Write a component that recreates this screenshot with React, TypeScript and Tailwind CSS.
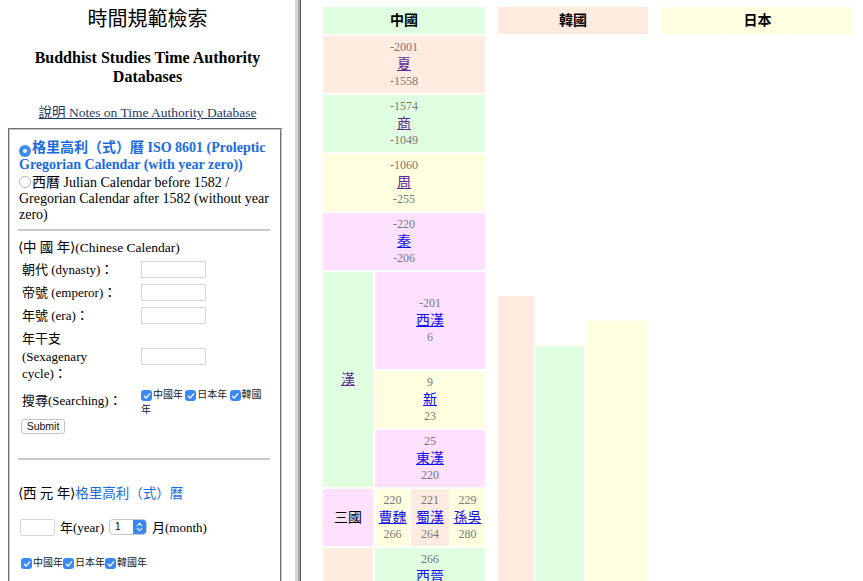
import React from 'react'

type EraProps = {
  from: string
  name: string
  to: string
  bg: string
  visited?: boolean
  className?: string
}

function Era({ from, name, to, bg, visited, className }: EraProps) {
  return (
    <div className={`${bg} flex flex-col items-center justify-center text-center leading-[17px] ${className ?? ''}`}>
      <span className="text-[12px] text-[#787878]">{from}</span>
      <a href="#" className={`text-[14px] underline ${visited ? 'text-[#5b2a94]' : 'text-[#1010ee]'}`}>
        {name}
      </a>
      <span className="text-[12px] text-[#787878]">{to}</span>
    </div>
  )
}

function Radio({ checked }: { checked?: boolean }) {
  if (checked) {
    return (
      <span className="inline-flex w-[12px] h-[12px] rounded-full bg-[#3d8bf6] items-center justify-center align-[-1px] mr-[1px]">
        <span className="w-[4px] h-[4px] rounded-full bg-white" />
      </span>
    )
  }
  return <span className="inline-block w-[12px] h-[12px] rounded-full border border-[#b9b9b9] bg-white align-[-1px] mr-[1px]" />
}

function Check() {
  return (
    <span className="inline-flex w-[11px] h-[11px] rounded-[3px] bg-[#3a88f6] items-center justify-center align-[-2px] mr-[1px]">
      <svg width="8" height="8" viewBox="0 0 8 8" fill="none">
        <path d="M1.3 4.2 3.1 6 6.7 1.8" stroke="white" strokeWidth="1.3" strokeLinecap="round" strokeLinejoin="round" />
      </svg>
    </span>
  )
}

function TextBox({ className }: { className?: string }) {
  return <span className={`block h-[17px] border border-[#d6d6d6] bg-white ${className ?? ''}`} />
}

function LeftPane() {
  return (
    <div className="w-[295px] h-[581px] overflow-hidden shrink-0 text-[13px] text-black">
      <h1 className="pt-[7px] text-center text-[20px] leading-[24px]">時間規範檢索</h1>
      <h3 className="mt-[17px] text-center font-bold text-[16px] leading-[19px]">
        Buddhist Studies Time Authority
        <br />
        Databases
      </h3>
      <p className="mt-[19px] text-center leading-[16px] text-[13.5px]">
        <a href="#" className="underline text-[#1f3a68]">說明 Notes on Time Authority Database</a>
      </p>

      <div className="mt-[7px] ml-[8px] w-[274px] h-[460px] border-2 [border-style:groove] border-[#c4c4c4] pl-[8px] pr-[10px] pt-[10px]">
        <div className="leading-[16px] pl-[1px] text-[14px]">
          <div className="font-bold text-[#1a6be0]">
            <Radio checked />格里高利（式）曆 ISO 8601 (Proleptic Gregorian Calendar (with year zero))
          </div>
          <div className="mt-[2px]">
            <Radio />西曆 Julian Calendar before 1582 / Gregorian Calendar after 1582 (without year zero)
          </div>
        </div>

        <div className="mt-[6px] h-[2px] bg-[#c9c9c9]" />

        <div className="mt-[9px] leading-[16px] text-[13.5px]">⟨中 國 年⟩(Chinese Calendar)</div>

        <div className="pl-[4px]">
          <div className="mt-[5px] flex items-center">
            <span className="w-[119px] leading-[17px] whitespace-nowrap">朝代 (dynasty)：</span>
            <TextBox className="w-[65px]" />
          </div>
          <div className="mt-[6px] flex items-center">
            <span className="w-[119px] leading-[17px] whitespace-nowrap">帝號 (emperor)：</span>
            <TextBox className="w-[65px]" />
          </div>
          <div className="mt-[6px] flex items-center">
            <span className="w-[119px] leading-[17px] whitespace-nowrap">年號 (era)：</span>
            <TextBox className="w-[65px]" />
          </div>
          <div className="mt-[6px] flex items-center">
            <span className="w-[119px] leading-[17.5px]">
              年干支
              <br />
              (Sexagenary
              <br />
              cycle)：
            </span>
            <TextBox className="w-[65px]" />
          </div>
          <div className="mt-[3px] flex items-center">
            <span className="w-[119px] leading-[17px] whitespace-nowrap">搜尋(Searching)：</span>
            <span className="text-[10px] leading-[15px] text-[#222] font-['Noto_Sans_CJK_TC',sans-serif]">
              <Check />中國年 <Check />日本年 <Check />韓國
              <br />年
            </span>
          </div>
        </div>

        <button className="mt-[2px] ml-[3px] h-[15px] w-[44px] rounded-[3px] border border-[#c3c3c3] bg-white text-[10.5px] leading-[13px] font-['Liberation_Sans',sans-serif] text-[#111]">
          Submit
        </button>

        <div className="mt-[22px] h-[2px] bg-[#c9c9c9]" />

        <div className="mt-[26px] leading-[16px] text-[13.5px]">
          ⟨西 元 年⟩<span className="text-[#1a6be0]">格里高利（式）曆</span>
        </div>

        <div className="mt-[17px] flex items-center leading-[17px] pl-[2px]">
          <TextBox className="w-[35px] rounded-[2px]" />
          <span className="ml-[5px]">年(year)</span>
          <span className="ml-[5px] inline-flex w-[38px] h-[16px] rounded-[4px] border border-[#c6c6c6] bg-white items-stretch overflow-hidden">
            <span className="flex-1 pl-[5px] text-[10px] leading-[14px] font-['Liberation_Sans',sans-serif]">1</span>
            <span className="w-[13px] bg-[#3b86f5] flex items-center justify-center">
              <svg width="7" height="10" viewBox="0 0 7 10" fill="none">
                <path d="M1.2 3.6 3.5 1.4 5.8 3.6M1.2 6.4 3.5 8.6 5.8 6.4" stroke="white" strokeWidth="1.1" strokeLinecap="round" strokeLinejoin="round" />
              </svg>
            </span>
          </span>
          <span className="ml-[5px]">月(month)</span>
        </div>

        <div className="mt-[18px] pl-[3px] text-[10px] leading-[15px] text-[#222] font-['Noto_Sans_CJK_TC',sans-serif] whitespace-nowrap">
          <Check />中國年<Check />日本年<Check />韓國年
        </div>
      </div>
    </div>
  )
}

function Divider() {
  return (
    <div className="w-[6px] h-[581px] shrink-0 flex">
      <div className="w-[3px] bg-[#d6d6d6]" />
      <div className="w-[2px] bg-[#a9a9a9]" />
      <div className="w-[1px] bg-[#555555]" />
    </div>
  )
}

function ChinaColumn() {
  return (
    <div className="self-start w-[162px] shrink-0 grid grid-cols-[50px_110px] gap-[2px]">
      <div className="col-span-2 h-[27px] bg-[#e0ffe0] flex items-center justify-center font-bold text-[14px]">中國</div>
      <Era className="col-span-2 h-[57px]" bg="bg-[#ffebe0]" from="-2001" name="夏" to="-1558" visited />
      <Era className="col-span-2 h-[57px]" bg="bg-[#e0ffe0]" from="-1574" name="商" to="-1049" visited />
      <Era className="col-span-2 h-[57px]" bg="bg-[#ffffe0]" from="-1060" name="周" to="-255" visited />
      <Era className="col-span-2 h-[57px]" bg="bg-[#ffe0ff]" from="-220" name="秦" to="-206" />

      <div className="row-span-3 bg-[#e0ffe0] flex items-center justify-center">
        <a href="#" className="text-[14px] underline text-[#5b2a94]">漢</a>
      </div>
      <Era className="h-[97px]" bg="bg-[#ffe0ff]" from="-201" name="西漢" to="6" />
      <Era className="h-[57px]" bg="bg-[#ffffe0]" from="9" name="新" to="23" />
      <Era className="h-[57px]" bg="bg-[#ffe0ff]" from="25" name="東漢" to="220" />

      <div className="h-[57px] bg-[#ffe0ff] flex items-center justify-center text-[14px]">三國</div>
      <div className="h-[57px] grid grid-cols-[35px_38px_35px] gap-[1px]">
        <Era bg="bg-[#ffffe0]" from="220" name="曹魏" to="266" />
        <Era bg="bg-[#ffebe0]" from="221" name="蜀漢" to="264" />
        <Era bg="bg-[#ffffe0]" from="229" name="孫吳" to="280" />
      </div>

      <div className="h-[57px] bg-[#ffebe0]" />
      <Era className="h-[57px] justify-start pt-[3px]" bg="bg-[#e0ffe0]" from="266" name="西晉" to="316" />
    </div>
  )
}

function KoreaColumn() {
  return (
    <div className="w-[150px] shrink-0 flex flex-col">
      <div className="h-[27px] bg-[#ffebe0] flex items-center justify-center font-bold text-[14px]">韓國</div>
      <div className="flex-1 mt-[2px] flex gap-px">
        <div className="w-[36px] mt-[260px] bg-[#ffebe0]" />
        <div className="w-[49px] mt-[310px] bg-[#e0ffe0]" />
        <div className="w-[63px] mt-[285px] bg-[#ffffe0]" />
      </div>
    </div>
  )
}

function JapanColumn() {
  return (
    <div className="w-[191px] shrink-0 self-start ml-px">
      <div className="h-[27px] grid grid-cols-3 gap-px">
        <div className="bg-[#ffffe0]" />
        <div className="bg-[#ffffe0] flex items-center justify-center font-bold text-[14px]">日本</div>
        <div className="bg-[#ffffe0]" />
      </div>
    </div>
  )
}

export default function App() {
  return (
    <div className="w-[863px] h-[581px] overflow-hidden flex bg-white font-['Liberation_Serif','Noto_Sans_CJK_TC',serif]">
      <LeftPane />
      <Divider />
      <div className="flex-1 h-[581px] overflow-hidden pl-[22px] pt-[7px] flex gap-[13px]">
        <ChinaColumn />
        <KoreaColumn />
        <JapanColumn />
      </div>
    </div>
  )
}
